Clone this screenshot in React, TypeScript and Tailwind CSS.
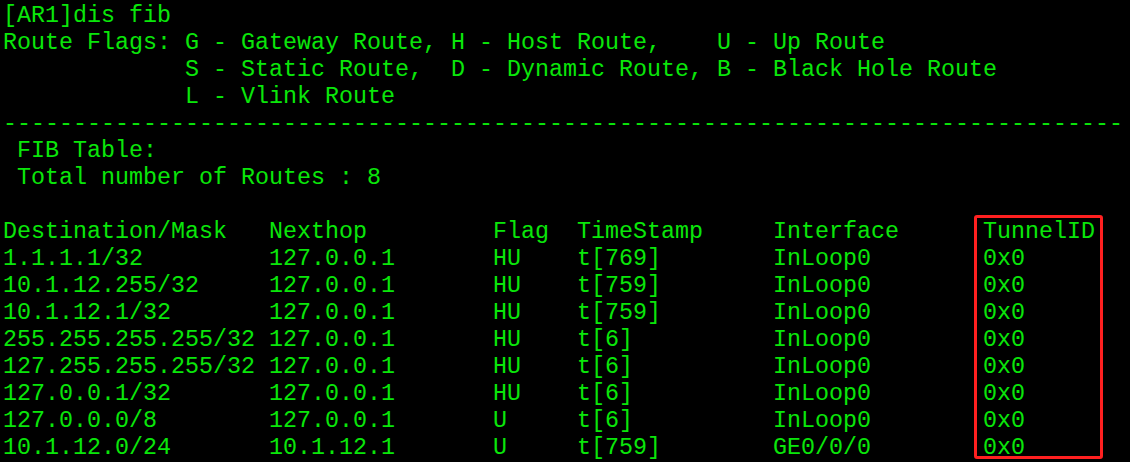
import React from "react";

const lines = [
  "[AR1]dis fib",
  "Route Flags: G - Gateway Route, H - Host Route,    U - Up Route",
  "             S - Static Route,  D - Dynamic Route, B - Black Hole Route",
  "             L - Vlink Route",
  "-".repeat(80),
  " FIB Table:",
  " Total number of Routes : 8",
  "",
];

const rows: [string, string, string, string, string, string][] = [
  ["Destination/Mask", "Nexthop", "Flag", "TimeStamp", "Interface", "TunnelID"],
  ["1.1.1.1/32", "127.0.0.1", "HU", "t[769]", "InLoop0", "0x0"],
  ["10.1.12.255/32", "127.0.0.1", "HU", "t[759]", "InLoop0", "0x0"],
  ["10.1.12.1/32", "127.0.0.1", "HU", "t[759]", "InLoop0", "0x0"],
  ["255.255.255.255/32", "127.0.0.1", "HU", "t[6]", "InLoop0", "0x0"],
  ["127.255.255.255/32", "127.0.0.1", "HU", "t[6]", "InLoop0", "0x0"],
  ["127.0.0.1/32", "127.0.0.1", "HU", "t[6]", "InLoop0", "0x0"],
  ["127.0.0.0/8", "127.0.0.1", "U", "t[6]", "InLoop0", "0x0"],
  ["10.1.12.0/24", "10.1.12.1", "U", "t[759]", "GE0/0/0", "0x0"],
];

const widths = [19, 16, 6, 14, 15, 0];

function fmt(r: string[]) {
  return r.map((c, i) => (widths[i] ? c.padEnd(widths[i], " ") : c)).join("");
}

export default function App() {
  const all = [...lines, ...rows.map(fmt)];
  return (
    <div className="relative w-[1130px] h-[462px] bg-black overflow-hidden">
      <pre
        className="m-0 pl-[3px] pt-[3px] text-[#0ae60a] text-[23.33px] leading-[27px] whitespace-pre"
        style={{ fontFamily: '"Liberation Mono", "Courier New", monospace' }}
      >
        {all.map((l, i) => (
          <div key={i} className="h-[27px]">
            {l}
          </div>
        ))}
      </pre>
      <div className="absolute left-[974px] top-[215px] w-[129px] h-[244px] border-[3px] border-[#ff2020] rounded-[3px]" />
    </div>
  );
}
